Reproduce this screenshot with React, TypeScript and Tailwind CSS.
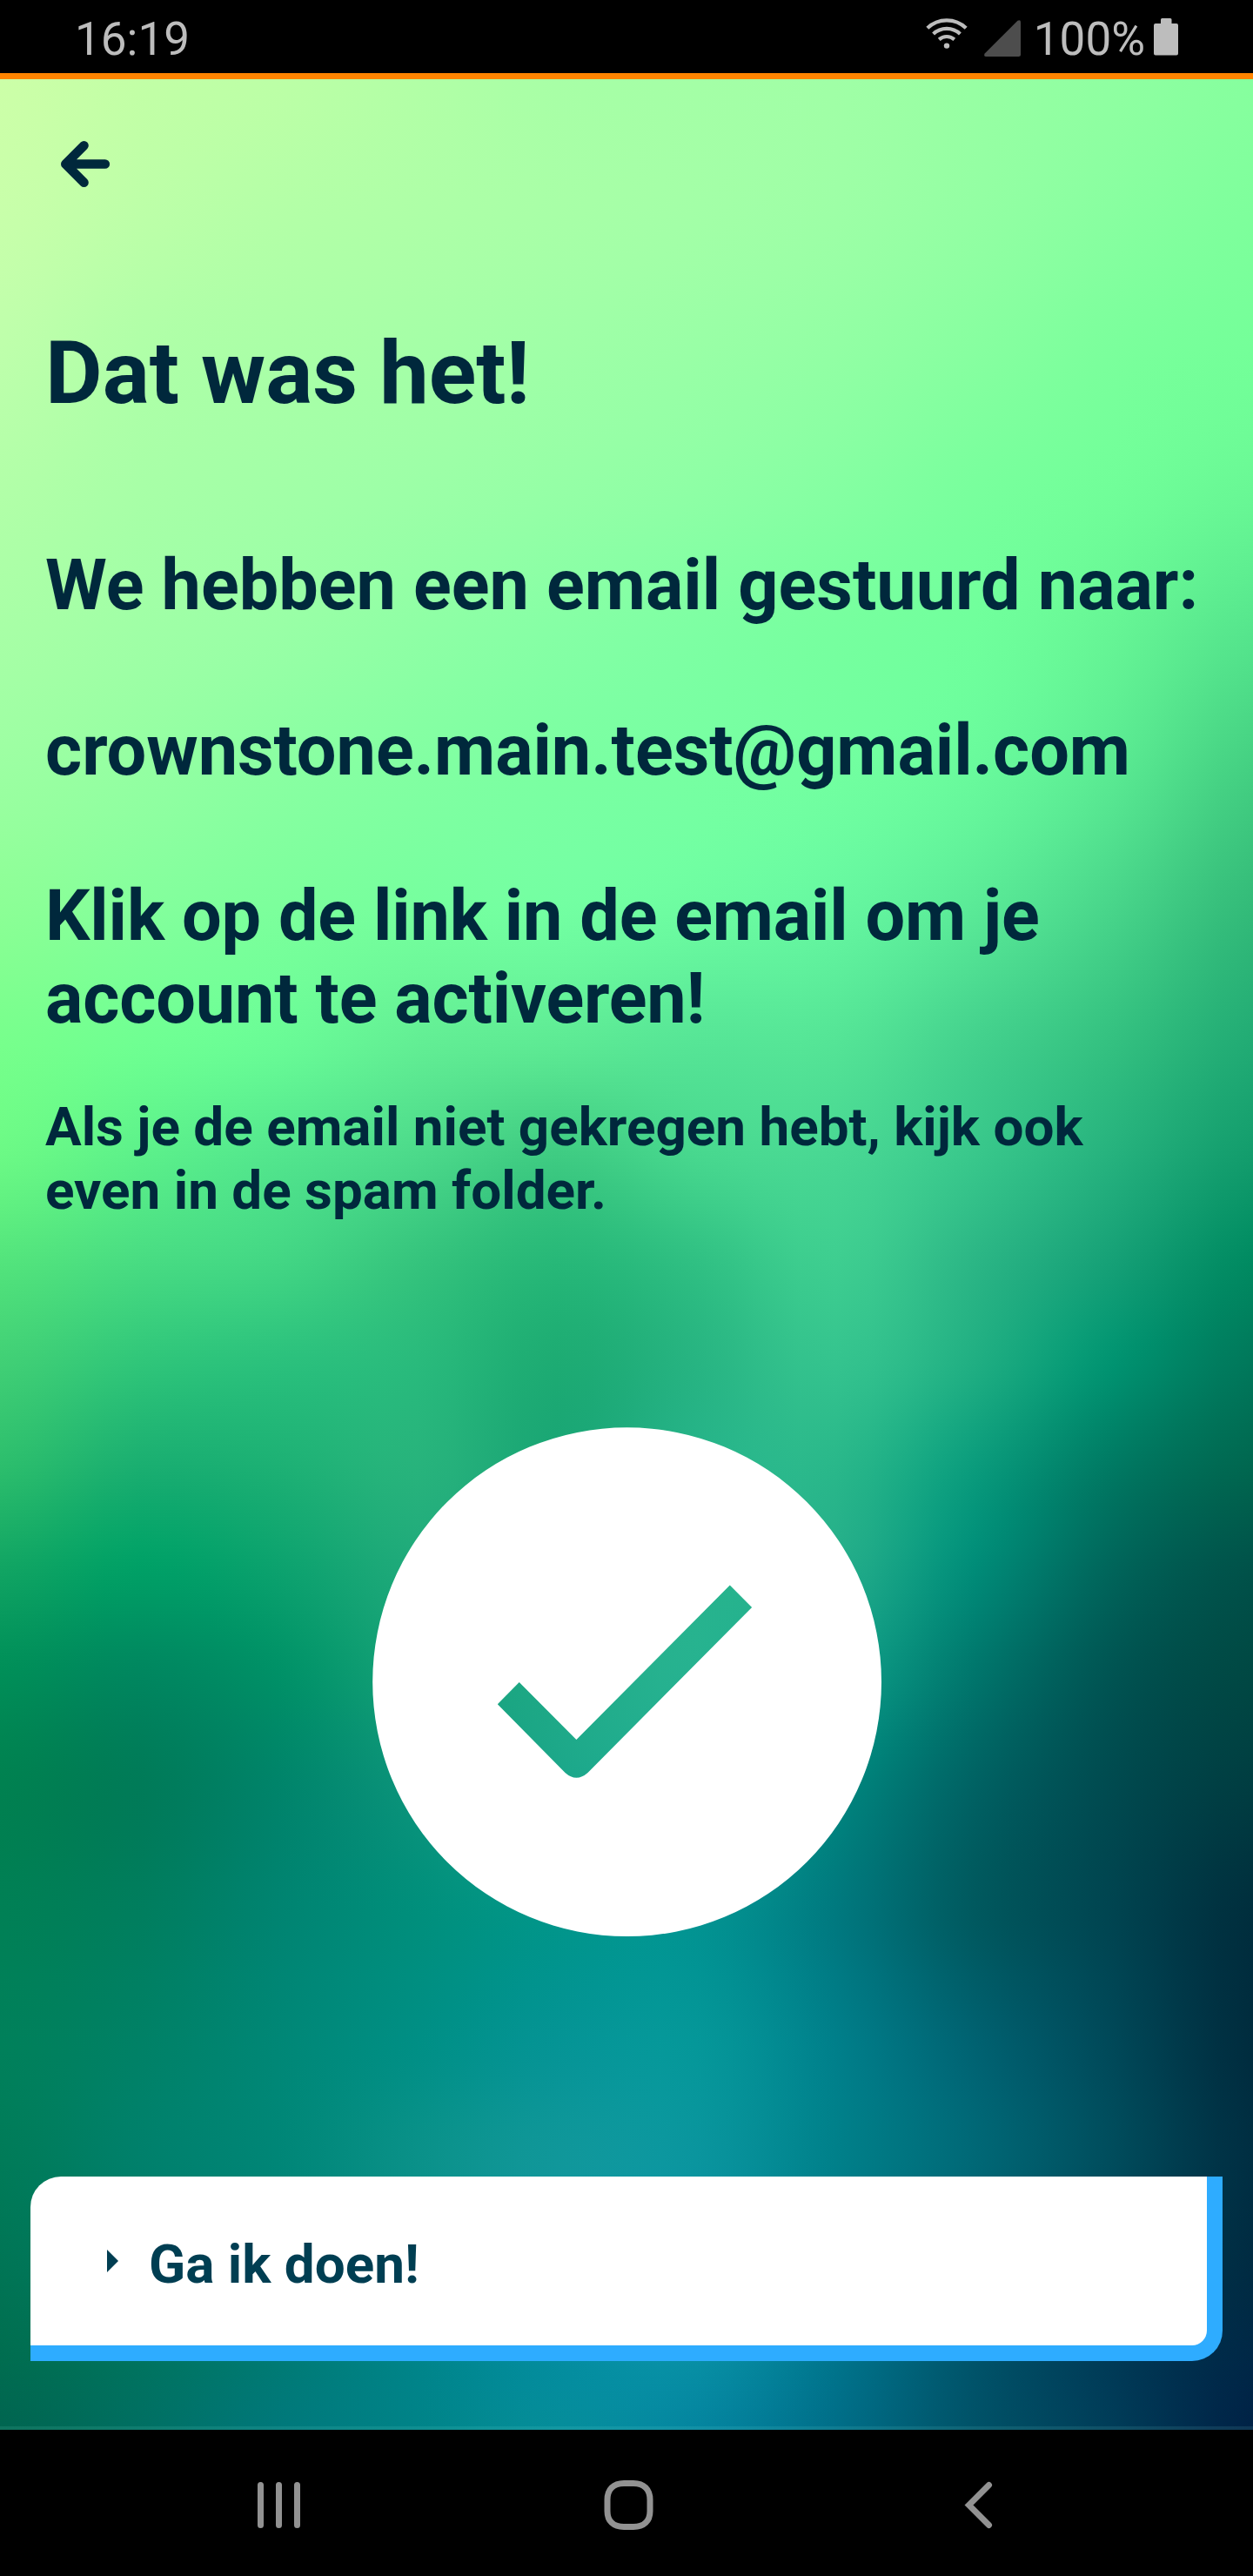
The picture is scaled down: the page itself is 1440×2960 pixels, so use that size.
import React from "react";

// Colour mesh of the backdrop: one row of ten evenly spaced colours per height.
const MESH_TOP = 91;
const MESH_BOTTOM = 2792;
const STRIP = 4;
const MESH: [number, string][] = [
  [91, "ccffa8 c2ffa6 bcffa6 b2ffa6 a8ffa6 a4ffa6 a0ffa6 97ffa3 8fffa1 86ff9e"],
  [240, "c8ffaa bdffa8 b4ffa7 aeffa7 a8ffa7 a3ffa7 9dffa6 93ffa3 88ffa0 7eff9c"],
  [400, "beffab b0ffa8 aaffa7 a5ffa7 9fffa7 99ffa6 92ffa4 87ffa0 7bff9c 74ff99"],
  [560, "b2ffa8 a8ffa7 a2ffa7 9cffa7 95ffa6 8effa5 85ffa2 79ff9d 71fe99 69f895"],
  [720, "a8ffa6 a0ffa6 99ffa6 8fffa5 86ffa5 7effa3 77ff9f 70ff9c 66f595 56e68d"],
  [880, "9cffa2 94ffa2 8affa2 82ffa2 7bffa2 77ffa2 72ffa0 69fa9c 5aea92 44d082"],
  [1040, "8cff96 84ff9c 7cff9c 76ff9e 73ffa2 6dfca1 66f7a0 5aea97 48d58a 33bb79"],
  [1200, "77ff8c 6fff92 69fb96 62ee94 5dea94 56e596 54e496 43d18d 33c080 21ab74"],
  [1330, "6bf985 5cf08a 52e58d 4bd98a 3ecb82 47d78e 48d793 38c78b 25b17d 129c6c"],
  [1450, "53e47c 48dc82 42d684 35c47d 27b878 30c083 3ece90 2bb685 15a076 008a61"],
  [1570, "40cf75 2fc579 2ac07c 29ba7c 1dab73 27b482 34c38e 1fae82 009270 00775a"],
  [1690, "2bbd6c 19ae70 1cb074 27b37c 1aa677 26b48a 29b78a 0a9b7c 007862 00664f"],
  [1800, "12a563 00a066 0ca26e 1faa7b 1ea885 26b38c 24ae8a 008c78 00655a 005249"],
  [1920, "008f58 00875f 009167 16a279 1ea986 26b290 10a088 00766c 005452 004843"],
  [2050, "008150 007b58 00846a 0c957b 1aa68a 1aa890 00887f 006263 004a4f 003d41"],
  [2200, "008055 007e5e 008471 008f7c 02968a 039491 00797f 00595f 004450 002e3d"],
  [2350, "00805a 008166 008776 008f85 059495 059799 007f8a 006271 004858 002c3e"],
  [2480, "007b58 00806b 008677 0a9189 10979a 0a959e 00808a 006876 004c5c 002e42"],
  [2600, "007555 007b66 008278 058c8a 0c94a0 0892a2 007a8a 005e6e 004257 002b42"],
  [2700, "006e50 00745f 007b74 00858a 048d9f 0890a5 00758c 00546a 003a56 002846"],
  [2792, "006550 006f62 00787a 008388 058d9a 04859f 006e88 005268 003c58 002246"],
];

const ROWS = MESH.map(([y, row]) => ({
  y,
  colors: row.split(" ").map((h) => [0, 2, 4].map((i) => parseInt(h.slice(i, i + 2), 16))),
}));

function cubic(a: number, b: number, c: number, d: number, t: number) {
  return b + 0.5 * t * (c - a + t * (2 * a - 5 * b + 4 * c - d + t * (3 * (b - c) + d - a)));
}

function sampleColors(values: number[][], i: number, t: number) {
  const at = (k: number) => values[Math.max(0, Math.min(values.length - 1, k))];
  return at(i).map((_, ch) => cubic(at(i - 1)[ch], at(i)[ch], at(i + 1)[ch], at(i + 2)[ch], t));
}

function stripGradient(y: number) {
  let i = 0;
  while (i < ROWS.length - 2 && ROWS[i + 1].y <= y) i++;
  const t = Math.min(1, (y - ROWS[i].y) / (ROWS[i + 1].y - ROWS[i].y));
  const line = ROWS[0].colors.map((_, col) =>
    sampleColors(ROWS.map((r) => r.colors[col]), i, t),
  );
  const stops: string[] = [];
  const last = (line.length - 1) * 4;
  for (let k = 0; k <= last; k++) {
    const rgb = sampleColors(line, Math.floor(k / 4), (k % 4) / 4);
    const text = rgb.map((v) => Math.max(0, Math.min(255, v)).toFixed(1)).join(" ");
    stops.push(`rgb(${text}) ${((k / last) * 100).toFixed(2)}%`);
  }
  return `linear-gradient(to right, ${stops.join(",")})`;
}

const STRIPS = Array.from({ length: Math.ceil((MESH_BOTTOM - MESH_TOP) / STRIP) }, (_, n) =>
  stripGradient(MESH_TOP + n * STRIP + STRIP / 2),
);

function Backdrop() {
  return (
    <div className="absolute inset-0 overflow-hidden" aria-hidden="true">
      {STRIPS.map((g, i) => (
        <div key={i} className="h-1 w-full" style={{ backgroundImage: g }} />
      ))}
      <div className="absolute inset-x-0 bottom-0 h-1 bg-teal-200/10" />
    </div>
  );
}

function StatusBar() {
  return (
    <header className="flex h-[91px] shrink-0 items-start justify-between border-b-[7px] border-[#ff8400] bg-black pr-[86px] pl-[86px] text-[53px] leading-[62px] text-[#bdbdbd]">
      <span className="mt-[14px]">16:19</span>
      <div className="flex items-start">
        <svg className="mt-5 h-9 w-12" viewBox="0 0 48 36" fill="none" stroke="#bdbdbd" strokeWidth="4.2">
          <path d="M1.8 12.3a32 32 0 0 1 44.4 0" />
          <path d="M8.6 19a22.5 22.5 0 0 1 30.8 0" />
          <path d="M15.2 25.3a13.4 13.4 0 0 1 17.6 0" />
          <circle cx="24" cy="32.6" r="3.2" fill="#bdbdbd" stroke="none" />
        </svg>
        <svg className="mt-[23px] ml-[19px] h-[42px] w-[42px]" viewBox="0 0 42 42" fill="#4d4d4d">
          <path d="M38.5.7Q42-1 42 2.500V39.500Q42 42 39.500 42H2.500Q-1 42 .7 38.500Z" />
        </svg>
        <span className="mt-[14px] ml-[15px]">100%</span>
        <svg className="mt-[21px] ml-[10px] h-[43px] w-7" viewBox="0 0 28 43" fill="#bdbdbd">
          <path d="M8 1.500Q8 0 9.500 0H19Q20.500 0 20.500 1.500V6H26Q28 6 28 8V40.500Q28 42.500 26 42.500H2Q0 42.500 0 40.500V8Q0 6 2 6H8Z" />
        </svg>
      </div>
    </header>
  );
}

function NavBar() {
  return (
    <nav className="flex h-[168px] shrink-0 items-start bg-black pt-[57px] text-[#929292]">
      <svg className="ml-[292px] h-[60px] w-[60px]" viewBox="0 0 60 60" stroke="currentColor" strokeWidth="7" strokeLinecap="round">
        <path d="M7.500 6.500v46M28.500 6.500v46M49.500 6.500v46" />
      </svg>
      <svg className="ml-[340px] h-[60px] w-[60px]" viewBox="0 0 60 60" fill="none" stroke="currentColor" strokeWidth="7">
        <path d="M25 4.500h11C48 4.500 55 11.500 55 23.500v13C55 48 48 54.500 36 54.500h-11C13 54.500 6 48 6 36.500v-13C6 11.500 13 4.500 25 4.500Z" />
      </svg>
      <svg className="ml-[349px] h-[60px] w-[60px]" viewBox="0 0 60 60" fill="none" stroke="currentColor" strokeWidth="7" strokeLinecap="round">
        <path d="M35.500 6.500 12.500 29.500 35.500 52.500" />
      </svg>
    </nav>
  );
}

export default function App() {
  return (
    <div className="flex h-[2960px] w-[1440px] flex-col overflow-hidden bg-black font-['Roboto',sans-serif]">
      <StatusBar />
      <main className="relative flex-1">
        <Backdrop />
        <div className="relative flex h-full flex-col text-[#00283c]">
          <button className="mt-[67px] ml-[66px] h-[60px] w-[64px]" aria-label="Terug">
            <svg viewBox="0 0 64 60" className="h-[60px] w-[64px]" fill="none" stroke="currentColor" strokeWidth="10.6" strokeLinecap="round" strokeLinejoin="round">
              <path d="M30.500 9.300 9.300 30.500l21.200 21.200M9.300 30.500h45.500" />
            </svg>
          </button>
          <section className="mt-[152px] ml-[52px] font-bold whitespace-nowrap">
            <h1 className="text-[101px] leading-[118px]">Dat was het!</h1>
            <div className="mt-[137px] text-[81px] leading-[95px]">
              <p>We hebben een email gestuurd naar:</p>
              <p className="mt-[95px] tracking-[-0.05px]">crownstone.main.test@gmail.com</p>
              <p className="mt-[95px] tracking-[-0.16px]">
                Klik op de link in de email om je
                <br />
                account te activeren!
              </p>
            </div>
            <p className="mt-[63px] text-[62px] leading-[73px]">
              Als je de email niet gekregen hebt, kijk ook
              <br />
              even in de spam folder.
            </p>
          </section>
          <svg className="mt-[236px] ml-[428px] h-[586px] w-[586px] shrink-0" viewBox="428 1640 586 586" fill="#fff">
            <path
              fillRule="evenodd"
              d="M428.200 1932.700a292.400 292.400 0 1 0 584.800 0a292.400 292.400 0 1 0-584.800 0ZM838.800 1821.500 864.100 1847 675.500 2037Q662.400 2048.500 649.500 2037L571.800 1958.200 596.700 1933 662.400 1999Z"
            />
          </svg>
          <button className="mt-[275px] ml-[35px] flex h-[212px] w-[1370px] shrink-0 items-center rounded-tl-[35px] rounded-br-[35px] border-r-[18px] border-b-[18px] border-[#2eacff] bg-white pl-[88px] text-left text-[62px] leading-[73px] font-bold text-[#003e52]">
            <svg className="h-[26px] w-[13px]" viewBox="0 0 13 26" fill="currentColor">
              <path d="M0 0 13 13 0 26Z" />
            </svg>
            <span className="mt-[7px] ml-[35px]">Ga ik doen!</span>
          </button>
        </div>
      </main>
      <NavBar />
    </div>
  );
}
